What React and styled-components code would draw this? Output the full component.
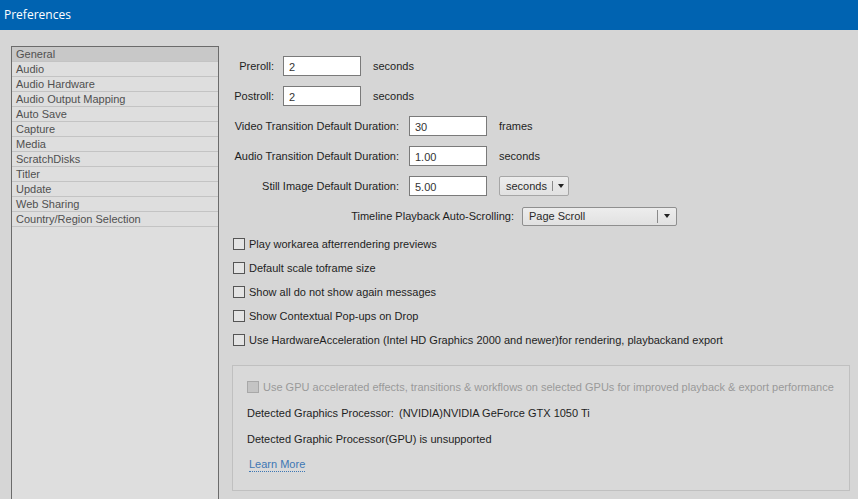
import styled, { createGlobalStyle } from "styled-components";

const GlobalStyle = createGlobalStyle`
  html, body {
    margin: 0;
    padding: 0;
    background: #d6d6d6;
  }
  body {
    font-family: "Liberation Sans", Arial, sans-serif;
    font-size: 11px;
    overflow: hidden;
  }
`;

const categories = [
  "General",
  "Audio",
  "Audio Hardware",
  "Audio Output Mapping",
  "Auto Save",
  "Capture",
  "Media",
  "ScratchDisks",
  "Titler",
  "Update",
  "Web Sharing",
  "Country/Region Selection",
];

const checks = [
  "Play workarea afterrendering previews",
  "Default scale toframe size",
  "Show all do not show again messages",
  "Show Contextual Pop-ups on Drop",
  "Use HardwareAcceleration (Intel HD Graphics 2000 and newer)for rendering, playbackand export",
];

function App() {
  return (
    <Window>
      <GlobalStyle />
      <TitleBar>Preferences</TitleBar>
      <Body>
        <Sidebar>
          {categories.map((c, i) => (
            <Item key={c} $selected={i === 0}>
              {c}
            </Item>
          ))}
        </Sidebar>
        <Main>
          <Row>
            <Label $width={42}>Preroll:</Label>
            <Input $gap={9} defaultValue="2" />
            <Unit>seconds</Unit>
          </Row>
          <Row>
            <Label $width={42}>Postroll:</Label>
            <Input $gap={9} defaultValue="2" />
            <Unit>seconds</Unit>
          </Row>
          <Row>
            <Label $width={167}>Video Transition Default Duration:</Label>
            <Input $gap={10} defaultValue="30" />
            <Unit>frames</Unit>
          </Row>
          <Row>
            <Label $width={167}>Audio Transition Default Duration:</Label>
            <Input $gap={10} defaultValue="1.00" />
            <Unit>seconds</Unit>
          </Row>
          <Row>
            <Label $width={167}>Still Image Default Duration:</Label>
            <Input $gap={10} defaultValue="5.00" />
            <Select $width={70} $margin={12}>
              <SelectText $fill={false}>seconds</SelectText>
              <Divider $short />
              <Arrow />
            </Select>
          </Row>
          <Row>
            <Label $width={282}>Timeline Playback Auto-Scrolling:</Label>
            <Select $width={155} $margin={8} $wide>
              <SelectText $fill>Page Scroll</SelectText>
              <Divider />
              <Arrow />
            </Select>
          </Row>
          <Checks>
            {checks.map((c) => (
              <CheckRow key={c}>
                <Box />
                <span>{c}</span>
              </CheckRow>
            ))}
          </Checks>
          <GpuPanel>
            <CheckRow $disabled>
              <Box $disabled />
              <span>
                Use GPU accelerated effects, transitions &amp; workflows on
                selected GPUs for improved playback &amp; export performance
              </span>
            </CheckRow>
            <InfoLine>
              <InfoKey>Detected Graphics Processor:</InfoKey>
              <span>(NVIDIA)NVIDIA GeForce GTX 1050 Ti</span>
            </InfoLine>
            <InfoLine>Detected Graphic Processor(GPU) is unsupported</InfoLine>
            <InfoLine>
              <Link>Learn More</Link>
            </InfoLine>
          </GpuPanel>
        </Main>
      </Body>
    </Window>
  );
}

export default App;

const Window = styled.div`
  width: 858px;
  height: 499px;
  overflow: hidden;
  background: #d6d6d6;
`;

const TitleBar = styled.div`
  height: 30px;
  background: #0063b1;
  color: #ffffff;
  font-size: 12px;
  line-height: 30px;
  padding-left: 4px;
  font-family: "Open Sans", "Liberation Sans", sans-serif;
`;

const Body = styled.div`
  display: flex;
  padding: 16px 0 0 11px;
  height: 500px;
`;

const Sidebar = styled.div`
  width: 206px;
  height: 480px;
  background: #dedede;
  border: 1px solid #6b6b6b;
  flex-shrink: 0;
`;

const Item = styled.div`
  height: 14px;
  line-height: 14px;
  padding-left: 4px;
  color: #505050;
  border-bottom: 1px solid #c3c3c3;
  background: ${({ $selected }) => ($selected ? "#c8c8c8" : "transparent")};
  white-space: nowrap;
`;

const Main = styled.div`
  flex: 1;
  padding: 10px 0 0 13px;
  display: flex;
  flex-direction: column;
  gap: 10px;
  color: #1e1e1e;
`;

const Row = styled.div`
  display: flex;
  align-items: center;
  height: 20px;
`;

const Label = styled.div`
  width: ${({ $width }) => $width}px;
  text-align: right;
  white-space: nowrap;
`;

const Input = styled.input`
  box-sizing: border-box;
  width: 78px;
  height: 20px;
  margin-left: ${({ $gap }) => $gap}px;
  border: 1px solid #7a7a7a;
  background: #ffffff;
  padding: 2px 5px 0;
  font: inherit;
  color: #333;
  outline: none;
`;

const Unit = styled.span`
  margin-left: 12px;
`;

const Select = styled.div`
  box-sizing: border-box;
  display: flex;
  align-items: center;
  width: ${({ $width }) => $width}px;
  height: ${({ $wide }) => ($wide ? 19 : 20)}px;
  margin-left: ${({ $margin }) => $margin}px;
  border: 1px solid ${({ $wide }) => ($wide ? "#8f8f8f" : "#a6a6a6")};
  border-radius: 2px;
  background: linear-gradient(#ededed, #e1e1e1);
  padding: 0 ${({ $wide }) => ($wide ? 6 : 4)}px 0 6px;
  color: #2a2a2a;
`;

const SelectText = styled.span`
  flex: ${({ $fill }) => ($fill ? 1 : "none")};
  margin-right: ${({ $fill }) => ($fill ? 0 : 5)}px;
`;

const Divider = styled.span`
  width: 1px;
  height: ${({ $short }) => ($short ? 10 : 13)}px;
  background: #8a8a8a;
  margin-right: ${({ $short }) => ($short ? 5 : 6)}px;
`;

const Arrow = styled.span`
  width: 0;
  height: 0;
  border-left: 3px solid transparent;
  border-right: 3px solid transparent;
  border-top: 4px solid #222;
`;

const Checks = styled.div`
  display: flex;
  flex-direction: column;
  gap: 8px;
`;

const CheckRow = styled.div`
  display: flex;
  align-items: center;
  gap: 4px;
  height: 16px;
  padding-left: 1px;
  white-space: nowrap;
  color: ${({ $disabled }) => ($disabled ? "#9a9a9a" : "inherit")};
`;

const Box = styled.span`
  box-sizing: border-box;
  width: 12px;
  height: 12px;
  border: 1px solid ${({ $disabled }) => ($disabled ? "#a8a8a8" : "#555")};
  background: ${({ $disabled }) => ($disabled ? "#c4c4c4" : "#e4e4e4")};
  flex-shrink: 0;
`;

const GpuPanel = styled.div`
  box-sizing: border-box;
  width: 618px;
  height: 126px;
  margin-top: 7px;
  border: 1px solid #c0c0c0;
  background: #d9d9d9;
  padding: 13px 0 0 13px;
  display: flex;
  flex-direction: column;
  gap: 10px;
`;

const InfoLine = styled.div`
  display: flex;
  align-items: center;
  height: 16px;
  padding-left: 1px;
  white-space: nowrap;
`;

const InfoKey = styled.span`
  width: 152px;
`;

const Link = styled.span`
  color: #3d77b4;
  margin-left: 2px;
  border-bottom: 1px dotted #3d77b4;
  line-height: 13px;
`;
